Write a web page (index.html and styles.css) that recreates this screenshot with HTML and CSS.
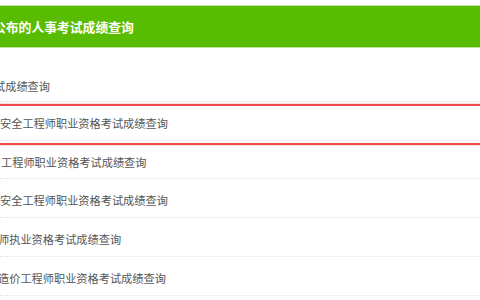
FILE: index.html
```html
<!DOCTYPE html>
<html lang="zh-CN">
<head>
    <meta charset="UTF-8">
    <meta name="viewport" content="width=device-width, initial-scale=1.0">
    <title>成绩查询</title>
    <link rel="stylesheet" href="styles.css">
</head>
<body>
    <div class="panel">
        <h2 class="panel-title">公布的人事考试成绩查询</h2>
        <ul class="score-list">
            <li class="row row-first shift-lg">试成绩查询</li>
            <li class="row">安全工程师职业资格考试成绩查询</li>
            <li class="row shift-xs">工程师职业资格考试成绩查询</li>
            <li class="row">安全工程师职业资格考试成绩查询</li>
            <li class="row shift-sm">师执业资格考试成绩查询</li>
            <li class="row shift-md">造价工程师职业资格考试成绩查询</li>
        </ul>
        <!-- red highlight drawn over the second row -->
        <div class="mark"></div>
    </div>
</body>
</html>
```

FILE: styles.css
```css
* {
    margin: 0;
    padding: 0;
    box-sizing: border-box;
}
body {
    background: #fff;
    font-family: "Liberation Sans", "Noto Sans CJK SC", sans-serif;
    overflow: hidden;
}
.panel {
    position: relative;
    padding-top: 5px;
}
.panel-title {
    height: 43px;
    line-height: 43px;
    background: #58bd00;
    border-top: 1px solid #c4e4a4;
    border-bottom: 1px solid #c4e4a4;
    color: #fff;
    font-size: 12.8px;
    font-weight: bold;
    text-indent: -7px;
    white-space: nowrap;
}
.score-list {
    list-style: none;
    margin-top: 15px;
}
.row {
    height: 38.8px;
    line-height: 34px;
    padding-top: 5px;
    padding-left: 0;
    border-bottom: 1px dotted #e2e2e2;
    color: #555;
    font-size: 11.2px;
    white-space: nowrap;
}
.row-first {
    padding-top: 6px;
    line-height: 36px;
}
.shift-xs {
    padding-left: 1px;
}
.shift-sm {
    text-indent: -2px;
}
.shift-md {
    text-indent: -2px;
}
.shift-lg {
    text-indent: -6px;
}
.mark {
    position: absolute;
    top: 104px;
    left: -10px;
    right: -10px;
    height: 41px;
    border: 2px solid #f24a4a;
    box-shadow: 0 0 2px rgba(240, 60, 60, 0.5);
}
```
